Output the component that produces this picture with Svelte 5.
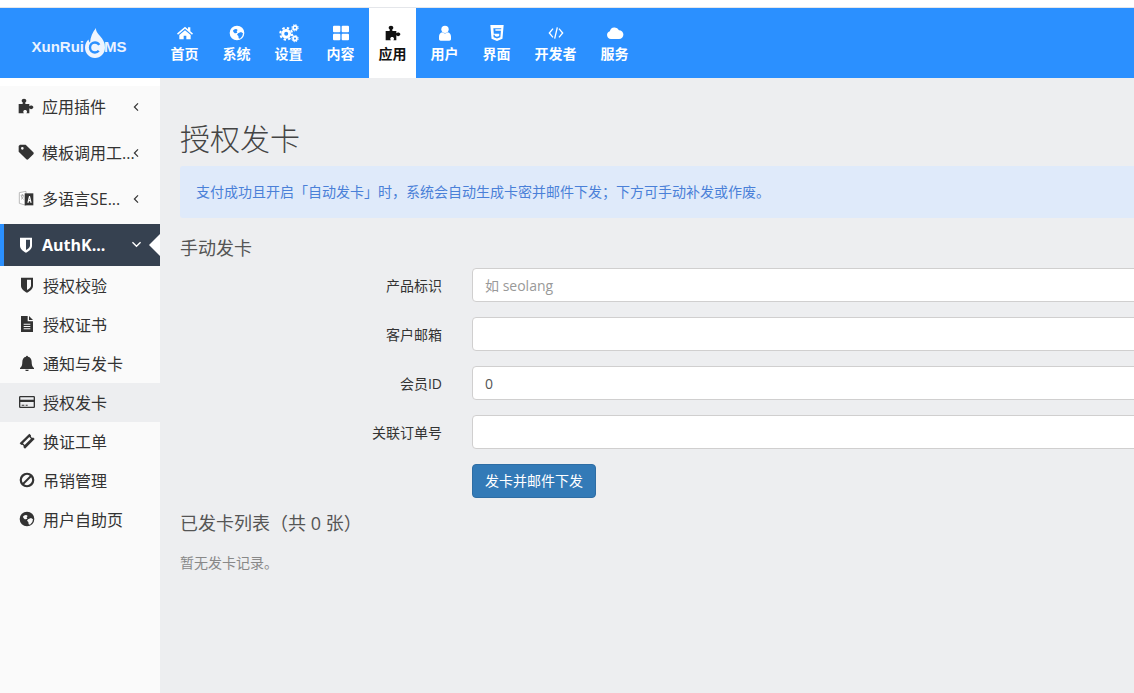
<script>
  const icons = {
    home: '<path d="M12 2.500 0 12.800l1.500 1.800L12 5.700l10.500 8.900 1.500-1.800-4-3.400V3.500h-3.500v2.900z"/><path d="M12 7.800 3.500 15v6.500H10V16h4v5.500h6.500V15z"/>',
    globe: '<path fill-rule="evenodd" d="M12 1a11 11 0 1 0 0 22 11 11 0 0 0 0-22zM6 8.500c1-1.500 3-3 5-2.500l2 1.500-1.500 2 1 2-2.500 1c-2 0-3.500-2-4-4zm7.500 4 4.500-2 3 2-1 4-3.500 4-2-.500-.5-3.500-2-2z"/>',
    cogs: '<g transform="translate(-2.400 -2.400) scale(1.200)"><circle cx="8.500" cy="13" r="4.300" fill="none" stroke="currentColor" stroke-width="3.600"/><circle cx="8.500" cy="13" r="7.400" fill="none" stroke="currentColor" stroke-width="2.600" stroke-dasharray="3 2.800"/><circle cx="19.500" cy="5.500" r="2.400" fill="none" stroke="currentColor" stroke-width="2.200"/><circle cx="19.500" cy="5.500" r="4" fill="none" stroke="currentColor" stroke-width="1.200" stroke-dasharray="1.700 1.450"/><circle cx="19.500" cy="19" r="2.400" fill="none" stroke="currentColor" stroke-width="2.200"/><circle cx="19.500" cy="19" r="4" fill="none" stroke="currentColor" stroke-width="1.200" stroke-dasharray="1.700 1.450"/></g>',
    grid: '<rect x="0" y="1" width="11" height="10" rx="1.500"/><rect x="13" y="1" width="11" height="10" rx="1.500"/><rect x="0" y="13" width="11" height="10" rx="1.500"/><rect x="13" y="13" width="11" height="10" rx="1.500"/>',
    puzzle: '<path d="M1 9h6V6.500C6 5.700 5.500 5 5.500 4 5.500 2.200 7 1 9 1s3.500 1.200 3.500 3c0 1-.500 1.700-1.500 2.500V9h6v3.500c.800-.800 1.500-1.200 2.500-1.200 1.800 0 3.500 1 3.500 2.700s-1.700 2.700-3.500 2.700c-1 0-1.700-.400-2.500-1.200V23h-4.500c.700-1 1-1.700 1-2.500 0-1.500-1.300-2.500-2.800-2.500s-2.800 1-2.800 2.500c0 .800.300 1.500 1 2.500H1z"/>',
    user: '<circle cx="12" cy="6.500" r="5.500"/><path d="M3 21v-3.500C3 14 5 11.500 7.800 11c1 1 2.500 1.600 4.200 1.600s3.200-.600 4.200-1.600c2.800.500 4.800 3 4.800 6.500V21c0 1.500-1 2.500-2.500 2.500h-13C4 23.500 3 22.500 3 21z"/>',
    html5: '<path fill-rule="evenodd" d="M2 0h20l-1.800 20.500L12 24l-8.200-3.500zm4.500 5 .7 8h8.300l-.3 3.500-3.200 1-3.200-1-.200-2H6.600l.4 4 5 1.800 5-1.800.900-10H9.700l-.200-2.300h8.700l.3-1.200z"/>',
    code: '<path d="M7.500 5.500 2 12l5.500 6.500M16.500 5.500 22 12l-5.500 6.500M14 3.500 10 20.500" fill="none" stroke="currentColor" stroke-width="2"/>',
    cloud: '<path d="M6 21a6 6 0 0 1-1.800-11.700A7.500 7.500 0 0 1 18 7.800 6.600 6.600 0 0 1 18 21z"/>',
    tag: '<path fill-rule="evenodd" d="M1 3 3 1h8.500L23 12.500c.800.800.800 2 0 2.800L15.300 23c-.800.800-2 .800-2.800 0L1 11.500zM6.500 4.500a2 2 0 1 0 0 4 2 2 0 0 0 0-4z"/>',
    shield: '<path fill-rule="evenodd" d="M3 1h18v12c0 5-5 8.500-9 10.500C8 21.500 3 18 3 13zm9 3v15.500c2.500-1.500 6-3.800 6-6.500V4z"/>',
    file: '<path fill-rule="evenodd" d="M3 0h10v8h8v16H3zm12 0 6 6h-6zM7 11.500V13h10v-1.500zm0 3.500v1.500h10V15zm0 3.500V20h10v-1.500z"/>',
    bell: '<path d="M12 1c1 0 1.500.600 1.500 1.500C17 3.200 19 6 19 10c0 5 1 7.500 3.500 9.500V21h-21v-1.500C4 17.500 5 15 5 10c0-4 2-6.800 5.500-7.500C10.500 1.600 11 1 12 1zM9.500 22h5a2.500 2.500 0 0 1-5 0z"/>',
    card: '<path fill-rule="evenodd" d="M2 3h20a2 2 0 0 1 2 2v14a2 2 0 0 1-2 2H2a2 2 0 0 1-2-2V5a2 2 0 0 1 2-2zm0 2v3.500h20V5zm0 7v7h20v-7zm2 4h4v1.500H4zm6 0h3v1.500h-3z"/>',
    ticket: '<path fill-rule="evenodd" d="M15.500 1 18 3.500c-.500 1-.300 2 .500 2.700.700.800 1.700 1 2.700.500L23.500 9 9 23.500 6.700 21.200c.500-1 .300-2-.500-2.700-.700-.800-1.700-1-2.700-.500L1 15.500zm0 5L6 15.500 8.500 18 18 8.500z"/>',
    ban: '<path fill-rule="evenodd" d="M12 1a11 11 0 1 0 0 22 11 11 0 0 0 0-22zm-6.300 15.200A7.600 7.600 0 0 1 16.200 5.700zM7.800 18.300A7.600 7.600 0 0 0 18.300 7.800z"/>'
  };

  const lang = '<path fill="#fff" stroke="#999" stroke-width="1" d="M2 4l10-2v21l-10-3z"/><path d="M10 5h13v18H10z"/><path fill="#fff" d="M14 19l2.500-10h1.500l2.500 10h-2l-.4-2h-1.700l-.4 2zM16.800 15h1l-.5-2.800z"/><path fill="none" stroke="#888" d="M4 8h5M6.500 6v2M5 9c.5 3 2 4 3.500 5M8 9c-.500 3-2 4-3.500 5"/>';

  const nav = [
    { icon: "home", label: "首页" },
    { icon: "globe", label: "系统" },
    { icon: "cogs", label: "设置" },
    { icon: "grid", label: "内容" },
    { icon: "puzzle", label: "应用", active: true },
    { icon: "user", label: "用户" },
    { icon: "html5", label: "界面" },
    { icon: "code", label: "开发者" },
    { icon: "cloud", label: "服务" }
  ];

  const groups = [
    { icon: "puzzle", label: "应用插件" },
    { icon: "tag", label: "模板调用工..." },
    { icon: "lang", label: "多语言SE..." }
  ];

  const subs = [
    { icon: "shield", label: "授权校验" },
    { icon: "file", label: "授权证书" },
    { icon: "bell", label: "通知与发卡" },
    { icon: "card", label: "授权发卡", current: true },
    { icon: "ticket", label: "换证工单" },
    { icon: "ban", label: "吊销管理" },
    { icon: "globe", label: "用户自助页" }
  ];

  const fields = [
    { label: "产品标识", placeholder: "如 seolang", value: "" },
    { label: "客户邮箱", placeholder: "", value: "" },
    { label: "会员ID", placeholder: "", value: "0" },
    { label: "关联订单号", placeholder: "", value: "" }
  ];
</script>

<div class="page">
  <header class="topbar">
    <div class="logo">
      <span>XunRui</span>
      <svg class="flame" viewBox="0 0 20 30" width="20" height="30" aria-hidden="true">
        <path fill="#eef5ff" d="M11 0c-.500 3 1.500 5 4 8 3 3.500 5 6.500 5 11.500C20 25.500 15.500 30 10 30S0 25.500 0 19.500C0 16 1.500 13.500 3.500 11.500c.2 1.500.7 2.500 1.500 3C5.500 9 7.500 4 11 0z"/>
        <circle cx="10" cy="19.500" r="5" fill="none" stroke="#2b90ff" stroke-width="2.400" stroke-dasharray="24.400 7" stroke-dashoffset="-3.500"/>
      </svg>
      <span>MS</span>
    </div>
    <nav class="menu">
      {#each nav as item}
        <div class="menu-item" class:active={item.active}>
          <div class="menu-link">
            <svg viewBox="0 0 24 24" width="16" height="16" fill="currentColor" aria-hidden="true">{@html icons[item.icon]}</svg>
            <span>{item.label}</span>
          </div>
        </div>
      {/each}
    </nav>
  </header>

  <div class="body">
    <aside class="sidebar">
      {#each groups as group}
        <div class="group">
          <svg class="icon" viewBox="0 0 24 24" width="16" height="16" fill="currentColor" aria-hidden="true">{@html group.icon === "lang" ? lang : icons[group.icon]}</svg>
          <span class="group-label">{group.label}</span>
          <svg class="chev" viewBox="0 0 10 12" width="8" height="10" aria-hidden="true"><path d="M7.500 1.500 3 6l4.500 4.500" fill="none" stroke="currentColor" stroke-width="1.500"/></svg>
        </div>
      {/each}

      <div class="group-open">
        <svg class="icon" viewBox="0 0 24 24" width="16" height="16" fill="currentColor" aria-hidden="true">{@html icons.shield}</svg>
        <span class="group-label">AuthK...</span>
        <svg class="chev" viewBox="0 0 12 10" width="11" height="9" aria-hidden="true"><path d="M1.500 2.500 6 7l4.500-4.500" fill="none" stroke="currentColor" stroke-width="1.500"/></svg>
        <span class="notch"></span>
      </div>

      {#each subs as sub}
        <div class="sub" class:current={sub.current}>
          <svg class="icon" viewBox="0 0 24 24" width="16" height="16" fill="currentColor" aria-hidden="true">{@html icons[sub.icon]}</svg>
          <span>{sub.label}</span>
        </div>
      {/each}
    </aside>

    <main class="main">
      <div class="content">
        <h1>授权发卡</h1>
        <div class="alert">支付成功且开启「自动发卡」时，系统会自动生成卡密并邮件下发；下方可手动补发或作废。</div>
        <h2>手动发卡</h2>
        <form class="form">
          {#each fields as field}
            <label class="row">
              <span class="label">{field.label}</span>
              <input type="text" placeholder={field.placeholder} value={field.value} />
            </label>
          {/each}
          <div class="actions">
            <button type="button" class="btn">发卡并邮件下发</button>
          </div>
        </form>
        <h2 class="list-title">已发卡列表（共 0 张）</h2>
        <p class="empty">暂无发卡记录。</p>
      </div>
    </main>
  </div>
</div>

<style>
  :global(body) {
    margin: 0;
    background: #fff;
  }

  .page {
    height: 693px;
    overflow: hidden;
    padding-top: 7px;
    box-sizing: border-box;
    font-family: "Open Sans", "Noto Sans CJK SC", sans-serif;
    font-size: 14px;
    color: #333;
  }

  .topbar {
    display: flex;
    height: 71px;
    box-sizing: border-box;
    background: #2b90ff;
    border-top: 1px solid #e4e6ea;
  }

  .logo {
    width: 158px;
    display: flex;
    align-items: center;
    justify-content: center;
    font-family: "Liberation Sans", sans-serif;
    font-size: 15px;
    font-weight: 700;
    color: #eaf3ff;
  }

  .logo span {
    margin-top: 7px;
  }

  .flame {
    margin: 0 -1px 0 1px;
  }

  .menu {
    display: flex;
  }

  .menu-item {
    display: flex;
    padding: 0 2px 0 3px;
    color: #fff;
    font-weight: 700;
  }

  .menu-link {
    display: flex;
    flex-direction: column;
    align-items: center;
    justify-content: center;
    gap: 3px;
    padding: 2px 9.5px 0;
    line-height: 20px;
  }

  .menu-link svg {
    overflow: visible;
  }

  .menu-item span {
    white-space: nowrap;
  }

  .menu-item.active .menu-link {
    background: #fff;
    color: #111;
  }

  .body {
    display: flex;
    height: 615px;
  }

  .sidebar {
    width: 160px;
    flex: none;
    margin-top: 8px;
    background: #fafafa;
    color: #333;
    font-size: 16px;
  }

  .group {
    height: 46px;
    padding-bottom: 6px;
    box-sizing: border-box;
    display: flex;
    align-items: center;
    padding-left: 18px;
    gap: 8px;
    position: relative;
  }

  .group-label {
    white-space: nowrap;
  }

  .chev {
    position: absolute;
    right: 20px;
    top: 16px;
  }

  .group-open {
    height: 42px;
    display: flex;
    align-items: center;
    gap: 8px;
    box-sizing: border-box;
    background: #364150;
    color: #fff;
    border-left: 4px solid #2b90ff;
    padding-left: 14px;
    position: relative;
  }

  .group-open .group-label {
    font-weight: 700;
  }

  .group-open .chev {
    right: 18px;
    top: 16px;
  }

  .notch {
    position: absolute;
    right: 0;
    top: 50%;
    margin-top: -11px;
    border: 11px solid transparent;
    border-left: 0;
    border-right-color: #fff;
  }

  .sub {
    height: 39px;
    box-sizing: border-box;
    padding-bottom: 2px;
    display: flex;
    align-items: center;
    gap: 8px;
    padding-left: 19px;
  }

  .sub.current {
    background: #edeef0;
  }

  .main {
    flex: 1;
    min-width: 0;
    overflow: hidden;
    background: #edeef0;
  }

  .content {
    width: 1100px;
    padding-left: 20px;
  }

  h1 {
    margin: 43px 0 0;
    font-size: 30px;
    font-weight: 300;
    line-height: 36px;
    color: #444;
  }

  .alert {
    margin-top: 9px;
    height: 52px;
    line-height: 52px;
    padding-left: 16px;
    border-radius: 3px;
    background: #dfeafa;
    color: #4a80d8;
  }

  h2 {
    margin: 19px 0 0;
    font-size: 18px;
    font-weight: 400;
    line-height: 22px;
    color: #555;
  }

  .form {
    margin-top: 9px;
  }

  .row {
    display: flex;
    align-items: center;
    margin-bottom: 15px;
  }

  .label {
    width: 262px;
    margin-right: 30px;
    text-align: right;
  }

  input {
    width: 800px;
    height: 34px;
    box-sizing: border-box;
    padding: 0 12px;
    border: 1px solid #d0cfcf;
    border-radius: 4px;
    background: #fff;
    font: inherit;
    color: #555;
  }

  input::placeholder {
    color: #999;
    opacity: 1;
  }

  .actions {
    padding-left: 292px;
  }

  .btn {
    height: 34px;
    padding: 0 12px 2px;
    border: 1px solid #2e6da4;
    border-radius: 4px;
    background: #337ab7;
    color: #fff;
    font: inherit;
  }

  .list-title {
    margin-top: 14px;
  }

  .empty {
    margin: 18px 0 0;
    color: #888;
  }
</style>
